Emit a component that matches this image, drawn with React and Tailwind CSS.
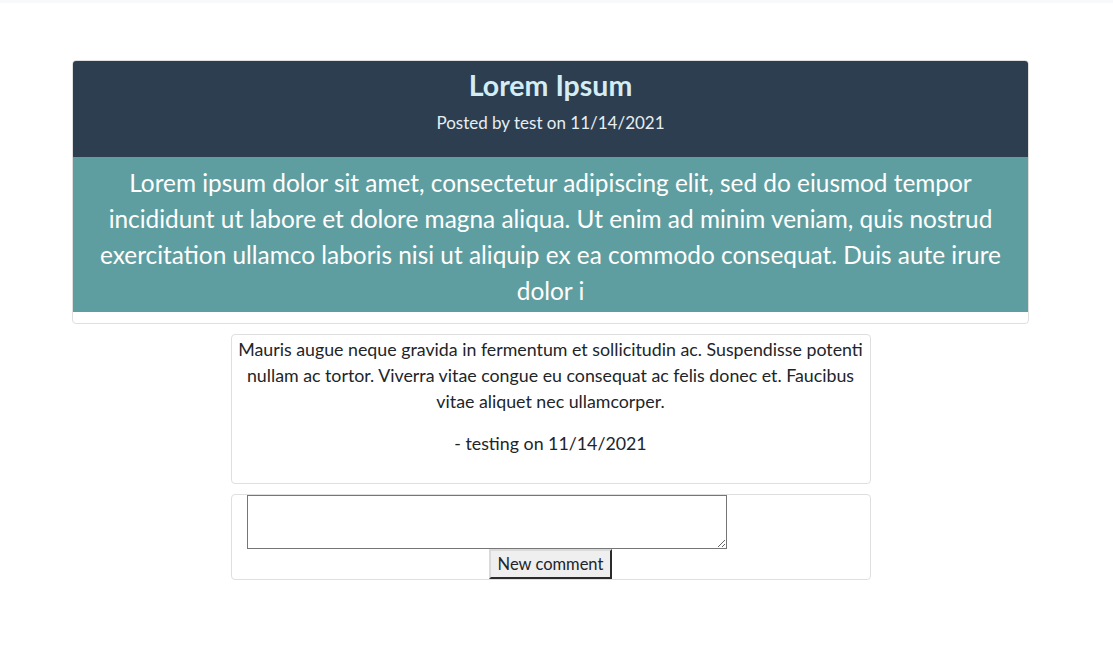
import React from 'react';

export default function App() {
  return (
    <div className="min-h-[652px] bg-white text-[#212529]" style={{ fontFamily: 'Lato, "Noto Sans", sans-serif' }}>
      <div className="h-[3px] bg-[#f8f9fa]" />
      <div className="w-[1101px]">
        <div className="mx-[72px] mt-[57px] border border-[#dfdfdf] rounded-[4px] overflow-hidden pb-[11px]">
          <div className="bg-[#2d3e50] text-center pt-[8px] pb-[22px]">
            <h3 className="text-[28.5px] font-bold text-[#d4edf5] leading-[33.6px]">Lorem Ipsum</h3>
            <p className="text-[17px] text-[#e6eef3] mt-[8px] leading-[24px]">Posted by test on 11/14/2021</p>
          </div>
          <div className="bg-[#5f9ea0] text-white text-center text-[24.4px] leading-[36px] px-[24px] pt-[8px] pb-[3px]">
            Lorem ipsum dolor sit amet, consectetur adipiscing elit, sed do eiusmod tempor<br />
            incididunt ut labore et dolore magna aliqua. Ut enim ad minim veniam, quis nostrud<br />
            exercitation ullamco laboris nisi ut aliquip ex ea commodo consequat. Duis aute irure<br />
            dolor i
          </div>
        </div>
        <div className="w-[640px] mx-auto mt-[10px] flex flex-col gap-[10px]">
          <div className="border border-[#dfdfdf] rounded-[4px] text-center text-[17.8px] leading-[26.4px] px-[4px] pt-[1px] pb-[27px]">
            <p>
              Mauris augue neque gravida in fermentum et sollicitudin ac. Suspendisse potenti<br />
              nullam ac tortor. Viverra vitae congue eu consequat ac felis donec et. Faucibus<br />
              vitae aliquet nec ullamcorper.
            </p>
            <p className="mt-[15px]">- testing on 11/14/2021</p>
          </div>
          <div className="border border-[#dfdfdf] rounded-[4px] text-center">
            <textarea className="block ml-[15px] w-[480px] h-[54px] border border-[#767676] resize" />
            <button className="text-[16.5px] leading-[24px] px-[7px] h-[30px] bg-[#efefef] border-2 border-t-[#dadada] border-l-[#dadada] border-r-[#2b2b2b] border-b-[#2b2b2b]">New comment</button>
          </div>
        </div>
      </div>
    </div>
  );
}
